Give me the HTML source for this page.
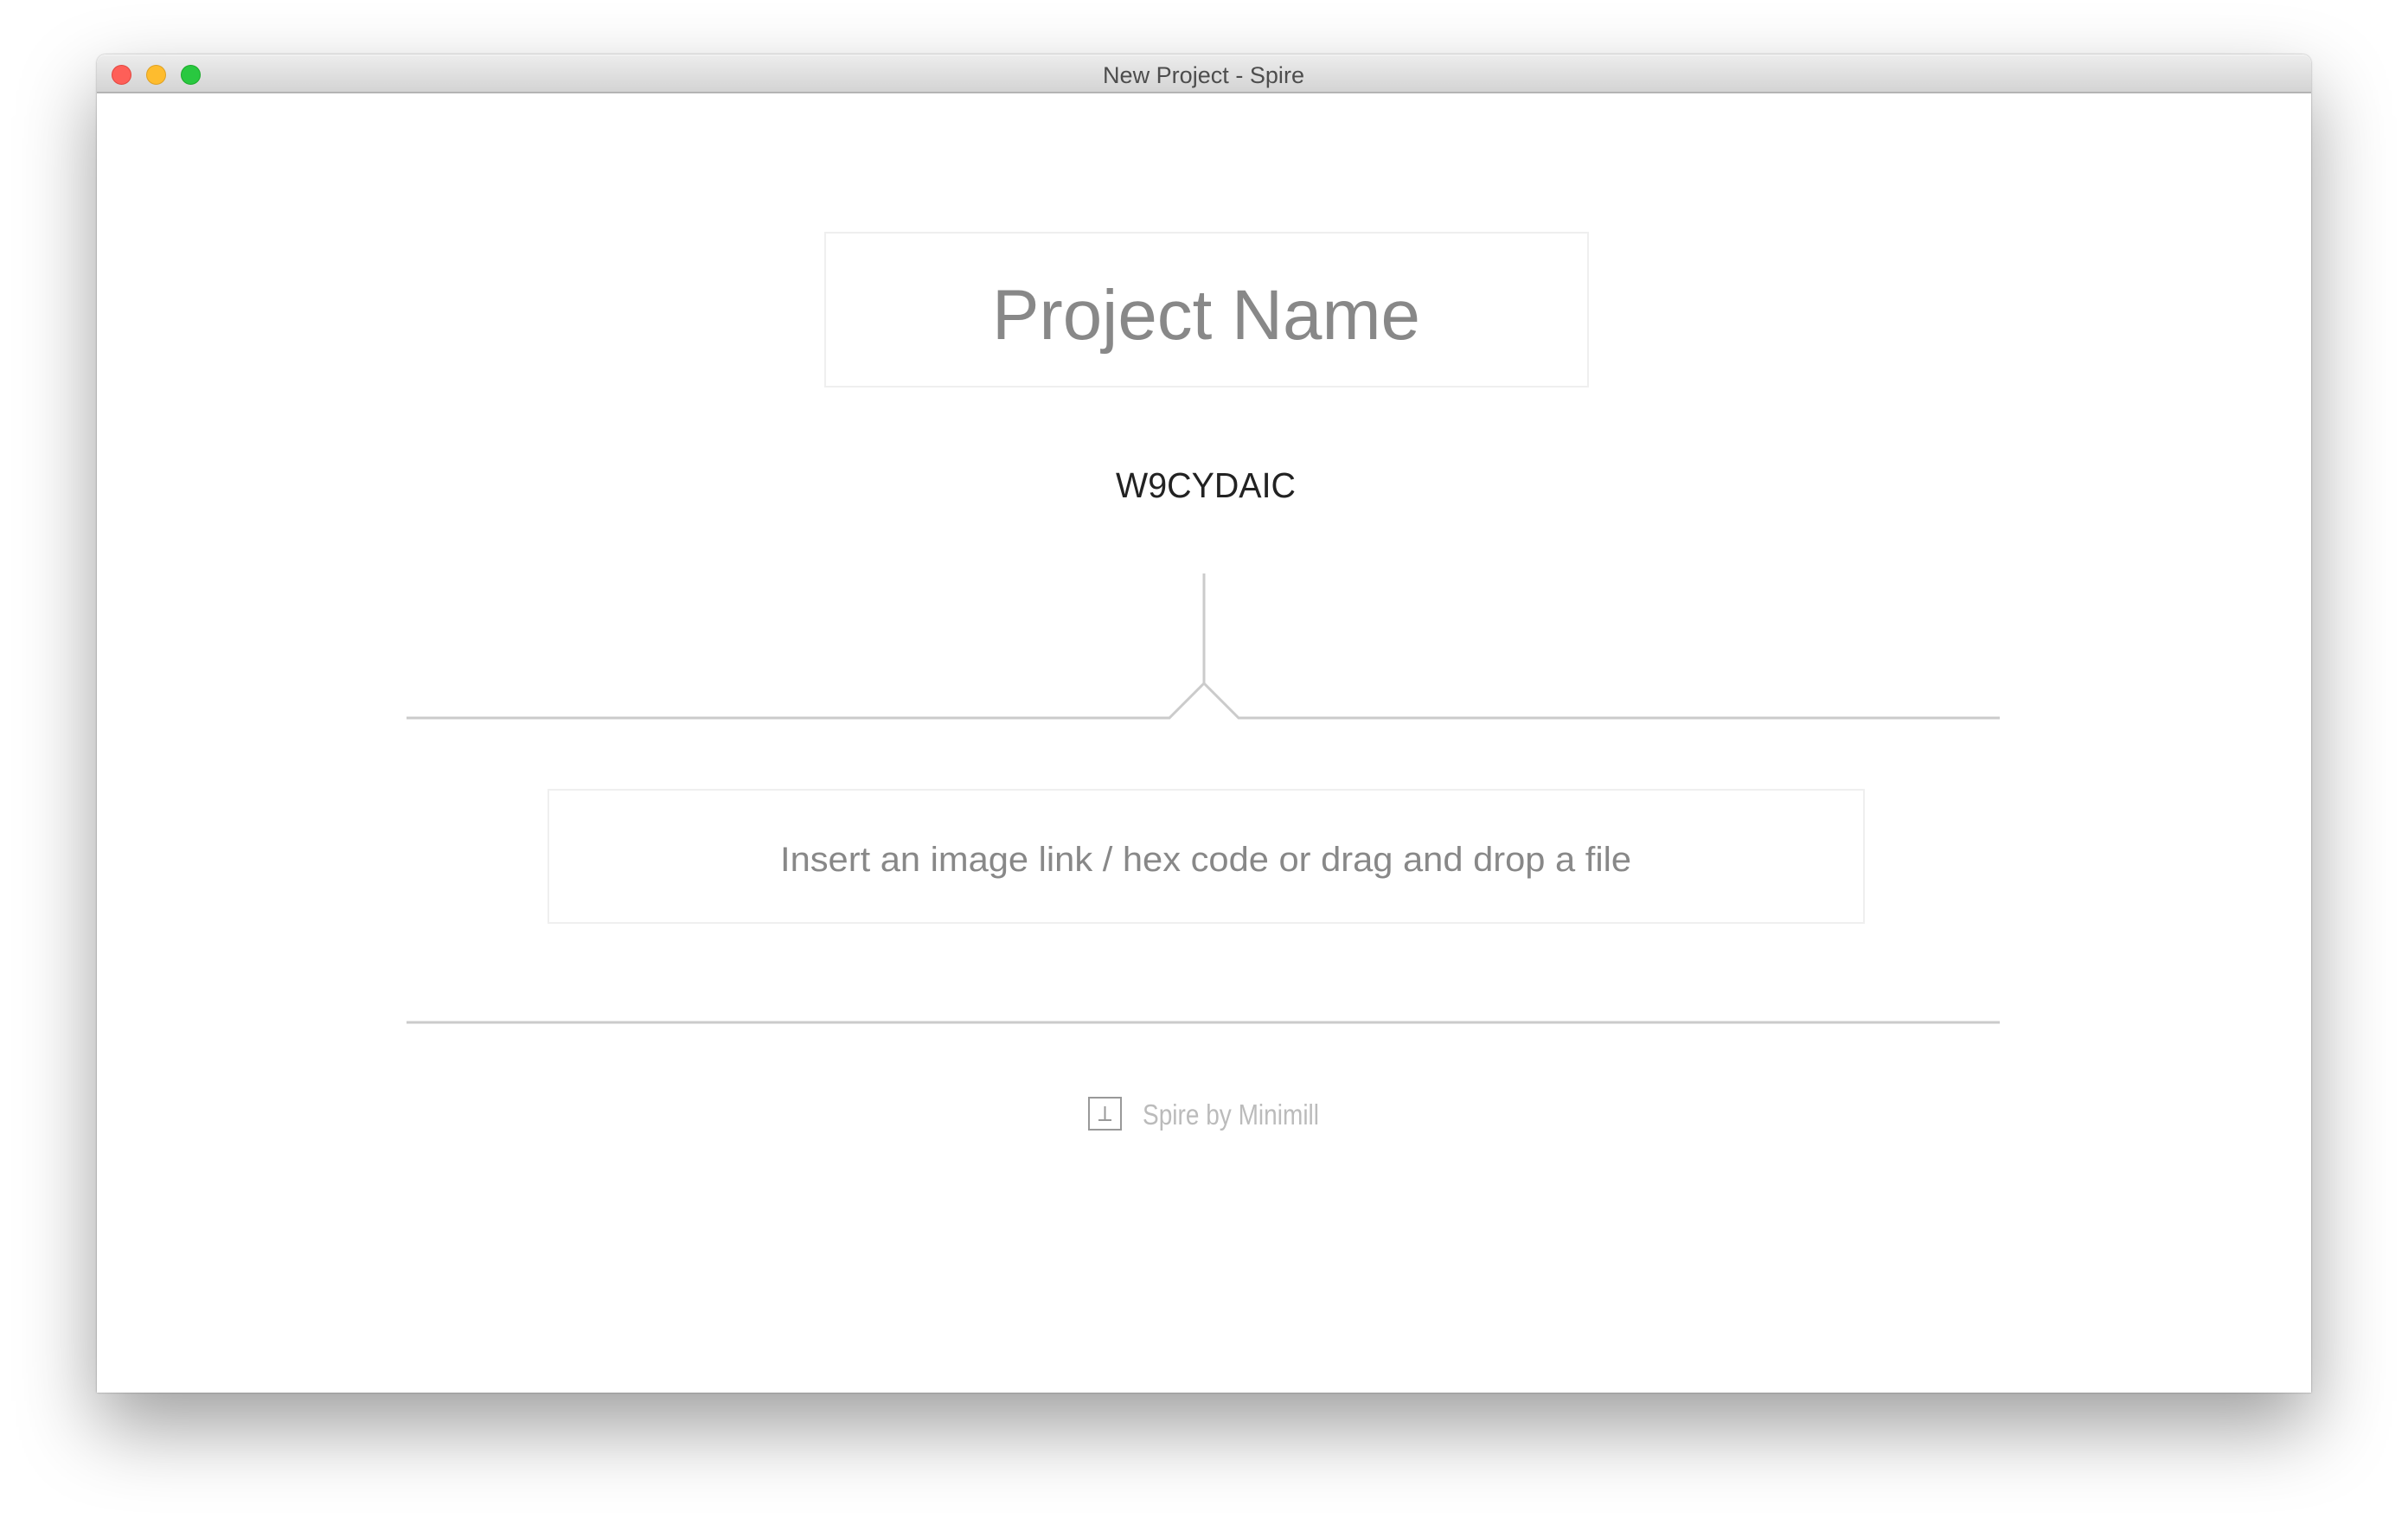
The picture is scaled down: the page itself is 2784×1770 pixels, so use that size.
<!DOCTYPE html>
<html><head><meta charset="utf-8"><style>
html,body{margin:0;padding:0;background:#fff;width:2784px;height:1770px;overflow:hidden}
.win{position:absolute;left:112px;top:63px;width:2560px;height:1547px;background:#fff;border-radius:10px 10px 0 0;
box-shadow:0 40px 90px rgba(0,0,0,0.38),0 0 2px rgba(0,0,0,0.35);}
.tb{position:absolute;left:0;top:0;right:0;height:43px;border-radius:10px 10px 0 0;background:linear-gradient(#ececec,#d4d4d4);border-bottom:2px solid #b4b4b4;border-top:1px solid #f6f6f6;box-sizing:border-box;height:45px}
.c{position:absolute;top:11px;width:23px;height:23px;border-radius:50%;box-sizing:border-box}
svg{position:absolute;left:0;top:0}
</style></head><body>
<div class="win">
<div class="tb">
<div class="c" style="left:17px;background:#fe5f58;border:1px solid #e2463f"></div>
<div class="c" style="left:57px;background:#febc2e;border:1px solid #dea123"></div>
<div class="c" style="left:97px;background:#29c840;border:1px solid #1aab29"></div>
</div>
</div>
<svg width="2784" height="1770" font-family="Liberation Sans, sans-serif">
<text x="1275" y="96" font-size="27" fill="#4d4d4d" textLength="233" lengthAdjust="spacingAndGlyphs">New Project - Spire</text>
<rect x="954" y="269" width="882" height="178" fill="none" stroke="#efefef" stroke-width="2"/>
<text x="1147" y="392" font-size="82" fill="#888" textLength="495" lengthAdjust="spacingAndGlyphs">Project Name</text>
<text x="1290" y="575" font-size="41" fill="#222" textLength="208" lengthAdjust="spacingAndGlyphs">W9CYDAIC</text>
<polyline points="470,830 1352,830 1392,790 1432,830 2312,830" fill="none" stroke="#cbcbcb" stroke-width="3"/>
<line x1="1392" y1="663" x2="1392" y2="790" stroke="#cbcbcb" stroke-width="3"/>
<rect x="634" y="913" width="1521" height="154" fill="none" stroke="#efefef" stroke-width="2"/>
<text x="902" y="1007" font-size="40" fill="#888" textLength="984" lengthAdjust="spacingAndGlyphs">Insert an image link / hex code or drag and drop a file</text>
<line x1="470" y1="1182" x2="2312" y2="1182" stroke="#cbcbcb" stroke-width="3"/>
<rect x="1259" y="1269" width="37" height="37" fill="none" stroke="#999" stroke-width="2"/>
<line x1="1270" y1="1295" x2="1285" y2="1295" stroke="#999" stroke-width="2"/>
<line x1="1277.5" y1="1279" x2="1277.5" y2="1295" stroke="#999" stroke-width="2"/>
<text x="1321" y="1300" font-size="33" fill="#bbb" textLength="204" lengthAdjust="spacingAndGlyphs">Spire by Minimill</text>
</svg>
</body></html>
